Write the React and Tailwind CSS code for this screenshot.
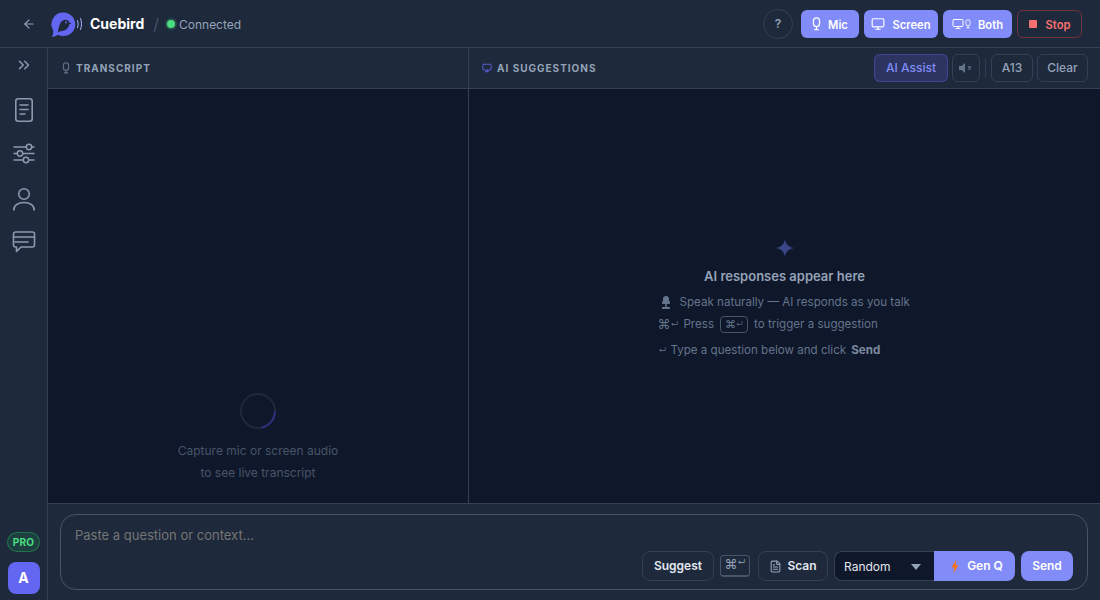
import { ArrowLeft, ChevronsRight, FileText, Monitor } from "lucide-react";

function Logo() {
  return (
    <svg width="36" height="26" viewBox="0 0 36 26" className="shrink-0">
      <path d="M12.500 1.500a11.800 11.800 0 1 1-5.600 22.200C5.500 24.800 3 25.800.8 25.800c1-1.500 1.600-3.800 1.400-6.300A11.800 11.800 0 0 1 12.500 1.500z" fill="#6366f1" />
      <path d="M6.800 21.500c.4-3 1-5.500 1.900-8 .8-2.500 2.800-4.700 5.600-4.700 2 0 3.500 1.100 4.100 2.800l2 .9-2 .8c-.6 3.700-3.600 6.300-7.500 6.800-1.500.2-3 .6-4.100 1.400z" fill="#1e293b" />
      <circle cx="15" cy="11.500" r="1" fill="#6366f1" />
      <path d="M26.500 9.500c.9 2.200.9 4.800 0 7.200M29.500 7.500c1.400 3.400 1.400 7.300 0 11" fill="none" stroke="#a5b4fc" strokeWidth="1" strokeLinecap="round" />
    </svg>
  );
}

function MicSmall({ className }) {
  return (
    <svg viewBox="0 0 10 16" className={className} fill="none" stroke="currentColor" strokeWidth="1.400">
      <rect x="1.500" y="1" width="7" height="10" rx="3.500" />
      <path d="M5 11v3M3 14.500h4" strokeLinecap="round" />
    </svg>
  );
}

function TopButton({ children, label, className = "" }) {
  return (
    <button className={`flex h-7 items-center justify-center gap-[7px] rounded-md bg-[#818cf8] text-[11.2px] font-semibold text-white ${className}`}>
      {children}
      <span className="pt-[3px]">{label}</span>
    </button>
  );
}

function ToolButton({ children, className = "" }) {
  return (
    <button className={`flex h-7 items-center justify-center rounded-md border border-[#334155] text-xs font-medium text-[#94a3b8] ${className}`}>
      {children}
    </button>
  );
}

function KeyGlyphs({ big = 13, small = "text-[8px]" }) {
  return (
    <>
      <span className={big === 13 ? "text-[13px] leading-none" : "text-[11px] leading-none"}>⌘</span>
      <span className={`${small} leading-none`}>↵</span>
    </>
  );
}

function SideNav() {
  return (
    <aside className="flex w-12 shrink-0 flex-col items-center border-r border-[#334155] bg-[#1e293b] pt-2 pb-[6px] text-[#8b9ab0]">
      <ChevronsRight className="h-[18px] w-[18px]" />
      <div className="mt-5 flex flex-col items-center gap-[14px]">
        <svg width="24" height="30" viewBox="0 0 24 30" fill="none" stroke="currentColor" strokeWidth="1.600" strokeLinecap="round">
          <rect x="3.800" y="4.800" width="16.400" height="22.400" rx="2.500" />
          <path d="M8 11h8M8 15.500h8M8 20h5" />
        </svg>
        <svg width="24" height="30" viewBox="0 0 24 30" fill="none" stroke="currentColor" strokeWidth="1.500">
          <path d="M1.500 9h21M1.500 15.500h21M1.500 22h21" />
          <circle cx="17" cy="9" r="2.700" fill="#1e293b" />
          <circle cx="8" cy="15.500" r="2.700" fill="#1e293b" />
          <circle cx="14" cy="22" r="2.700" fill="#1e293b" />
        </svg>
        <svg width="24" height="30" viewBox="0 0 24 30" fill="none" stroke="currentColor" strokeWidth="1.600" strokeLinecap="round">
          <circle cx="12" cy="12" r="5.300" />
          <path d="M1.800 28c0-4.800 4.500-7.500 10.200-7.500s10.200 2.700 10.200 7.500" />
        </svg>
        <svg width="24" height="30" viewBox="0 0 24 30" fill="none" stroke="currentColor" strokeWidth="1.600" strokeLinecap="round" strokeLinejoin="round">
          <path d="M3.500 6h17a2 2 0 0 1 2 2v11a2 2 0 0 1-2 2H9l-4.500 4.500V21h-1a2 2 0 0 1-2-2V8a2 2 0 0 1 2-2z" />
          <path d="M1.500 11h21M3 16h13" />
        </svg>
      </div>
      <div className="mt-auto flex flex-col items-center gap-[10px]">
        <span className="flex h-5 w-[33px] items-center justify-center rounded-full border border-[#22c55e]/40 bg-[#22c55e]/15 text-[10px] font-bold tracking-wide text-[#4ade80]">
          PRO
        </span>
        <span className="flex h-8 w-8 items-center justify-center rounded-lg bg-[#6366f1] text-sm font-bold text-white">
          A
        </span>
      </div>
    </aside>
  );
}

export default function App() {
  return (
    <div className="flex h-[600px] w-[1100px] flex-col overflow-hidden bg-[#0f172a] font-['Inter',sans-serif]">
      <header className="flex h-12 shrink-0 items-center border-b border-[#334155] bg-[#1e293b] pr-[18px] pl-[22px]">
        <ArrowLeft className="h-[14px] w-[14px] text-[#94a3b8]" />
        <div className="ml-[15px]">
          <Logo />
        </div>
        <span className="ml-[3px] text-sm font-bold text-white">Cuebird</span>
        <span className="ml-[9px] text-base text-[#475569]">/</span>
        <span className="ml-[8px] h-2 w-2 rounded-full bg-[#4ade80] shadow-[0_0_0_2px_rgba(74,222,128,0.2)]" />
        <span className="ml-[4px] pt-[2px] text-xs text-[#94a3b8]">Connected</span>
        <div className="ml-auto flex items-center gap-[5px]">
          <button className="mr-[3px] flex h-[30px] w-[30px] items-center justify-center rounded-full border border-[#334155] text-xs font-semibold text-[#94a3b8]">
            ?
          </button>
          <TopButton label="Mic" className="w-[58px]">
            <MicSmall className="h-[14px] w-[9px]" />
          </TopButton>
          <TopButton label="Screen" className="w-[74px]">
            <Monitor className="h-[14px] w-[14px]" />
          </TopButton>
          <TopButton label="Both" className="w-[69px]">
            <span className="flex items-center gap-px">
              <Monitor className="h-[12px] w-[12px]" />
              <MicSmall className="h-[12px] w-[6px]" />
            </span>
          </TopButton>
          <button className="flex h-7 w-[65px] items-center justify-center gap-[9px] rounded-md border border-[#ef4444]/40 text-[11.2px] font-semibold text-[#f87171]">
            <span className="h-2 w-2 rounded-[1px] bg-[#f87171]" />
            <span className="pt-[3px]">Stop</span>
          </button>
        </div>
      </header>

      <div className="flex min-h-0 flex-1">
        <SideNav />
        <main className="flex min-w-0 flex-1 flex-col">
          <div className="flex min-h-0 flex-1">
            <section className="flex w-[421px] shrink-0 flex-col border-r border-[#334155]">
              <div className="flex h-[41px] shrink-0 items-center gap-[6px] border-b border-[#334155] bg-[#1e293b] pl-[14px]">
                <MicSmall className="h-3 w-2 text-[#64748b]" />
                <span className="text-[10px] font-bold tracking-[0.1em] text-[#94a3b8]">TRANSCRIPT</span>
              </div>
              <div className="flex flex-1 flex-col items-center justify-end pb-[19px]">
                <div className="relative h-9 w-9 rounded-full border-2 border-[#1e293b]">
                  <svg viewBox="0 0 36 36" className="absolute -top-[2px] -left-[2px] h-9 w-9" fill="none">
                    <path d="M35 18A17 17 0 0 1 22 34.500" stroke="#312e81" strokeWidth="2" />
                  </svg>
                </div>
                <p className="mt-[11px] text-center text-xs leading-[22px] text-[#475569]">
                  Capture mic or screen audio
                  <br />
                  to see live transcript
                </p>
              </div>
            </section>

            <section className="flex min-w-0 flex-1 flex-col">
              <div className="flex h-[41px] shrink-0 items-center border-b border-[#334155] bg-[#1e293b] pr-3 pl-[13px]">
                <Monitor className="h-[10px] w-[10px] text-[#6366f1]" />
                <span className="ml-[5px] text-[10px] font-bold tracking-[0.1em] text-[#94a3b8]">AI SUGGESTIONS</span>
                <div className="ml-auto flex items-center gap-1">
                  <button className="flex h-7 w-[74px] items-center justify-center rounded-md border border-[#6366f1]/40 bg-[#6366f1]/20 text-xs font-medium text-[#818cf8]">
                    AI Assist
                  </button>
                  <ToolButton className="w-7">
                    <svg width="14" height="10" viewBox="0 0 14 10" className="text-[#64748b]">
                      <path d="M0 3h2.500L6 0v10L2.500 7H0z" fill="currentColor" />
                      <path d="M9 3.500l3 3M12 3.500l-3 3" stroke="currentColor" strokeWidth="1.200" />
                    </svg>
                  </ToolButton>
                  <span className="mx-px h-[18px] w-px bg-[#334155]" />
                  <ToolButton className="w-[42px]">A13</ToolButton>
                  <ToolButton className="w-[51px]">Clear</ToolButton>
                </div>
              </div>
              <div className="flex flex-1 flex-col items-center pt-[150px] text-[11.6px] text-[#64748b]">
                <svg width="18" height="18" viewBox="0 0 18 18">
                  <path d="M9 0c.8 5.300 3.400 8 9 9-5.600 1-8.200 3.700-9 9-.8-5.300-3.400-8-9-9 5.600-1 8.200-3.700 9-9z" fill="#3b4688" />
                </svg>
                <h2 className="mt-[11px] text-[13px] leading-4 font-semibold text-[#94a3b8]">AI responses appear here</h2>
                <p className="mt-[10px] flex h-4 w-[254px] items-center pl-[3px] leading-4 whitespace-nowrap">
                  <svg width="10" height="13" viewBox="0 0 10 13" className="mr-[9px] shrink-0">
                    <rect x="2" y="0" width="6" height="8" rx="3" fill="#64748b" />
                    <rect x="1" y="5" width="8" height="3" rx="1" fill="#64748b" />
                    <path d="M5 8v3" stroke="#64748b" strokeWidth="1.500" />
                    <rect x="1" y="11" width="8" height="2" rx=".5" fill="#64748b" />
                  </svg>
                  Speak naturally — AI responds as you talk
                </p>
                <p className="mt-[2px] flex h-6 w-[254px] items-center leading-4 whitespace-nowrap">
                  <KeyGlyphs />
                  <span className="ml-[5px]">Press</span>
                  <span className="mx-[6px] inline-flex h-[17px] w-7 items-center justify-center rounded border border-[#475569]">
                    <KeyGlyphs big={11} small="text-[7px]" />
                  </span>
                  to trigger a suggestion
                </p>
                <p className="mt-[6px] flex h-4 w-[254px] items-center leading-4 whitespace-nowrap">
                  <span className="ml-px text-[8px]">↵</span>
                  <span className="ml-[4px]">Type a question below and click</span>
                  <strong className="ml-[5px] font-bold text-[#7c8aa0]">Send</strong>
                </p>
              </div>
            </section>
          </div>

          <footer className="h-[97px] shrink-0 border-t border-[#334155] bg-[#1e293b] px-3 pt-[10px]">
            <div className="flex h-[76px] w-[1028px] flex-col rounded-2xl border border-[#475569] pt-[10px] pr-[14px] pb-2 pl-[14px]">
              <div className="text-[13px] leading-5 text-[#757575]">Paste a question or context...</div>
              <div className="mt-auto flex items-center justify-end">
                <button className="h-[30px] w-[72px] rounded-lg border border-[#334155] text-xs font-semibold text-[#e2e8f0]">
                  Suggest
                </button>
                <span className="ml-[6px] inline-flex h-[22px] w-[30px] items-start justify-center rounded border border-b-2 border-[#475569] pt-[2px] text-[#94a3b8]">
                  <KeyGlyphs />
                </span>
                <button className="ml-2 flex h-[30px] w-[70px] items-center justify-center gap-[5px] rounded-lg border border-[#334155] text-xs font-semibold text-[#e2e8f0]">
                  <FileText className="h-[13px] w-[13px] text-[#94a3b8]" />
                  Scan
                </button>
                <div className="ml-[6px] flex h-[30px]">
                  <div className="flex w-[100px] items-center rounded-l-lg border border-r-0 border-[#334155] bg-[#0f172a] pt-px pr-[13px] pl-[9px] text-xs text-[#e2e8f0]">
                    Random
                    <span className="ml-auto h-0 w-0 border-x-[5px] border-t-[6px] border-x-transparent border-t-[#94a3b8]" />
                  </div>
                  <button className="flex w-[81px] items-center justify-center gap-2 rounded-r-lg bg-[#818cf8] pl-[5px] text-xs font-semibold text-white">
                    <svg width="8" height="13" viewBox="0 0 8 13">
                      <path d="M5 0 .5 7.500h2.700L2.500 13 7.500 5.300H4.700z" fill="#f97316" />
                    </svg>
                    Gen Q
                  </button>
                </div>
                <button className="ml-[6px] h-[30px] w-[52px] rounded-lg bg-[#818cf8] text-xs font-semibold text-white">
                  Send
                </button>
              </div>
            </div>
          </footer>
        </main>
      </div>
    </div>
  );
}
